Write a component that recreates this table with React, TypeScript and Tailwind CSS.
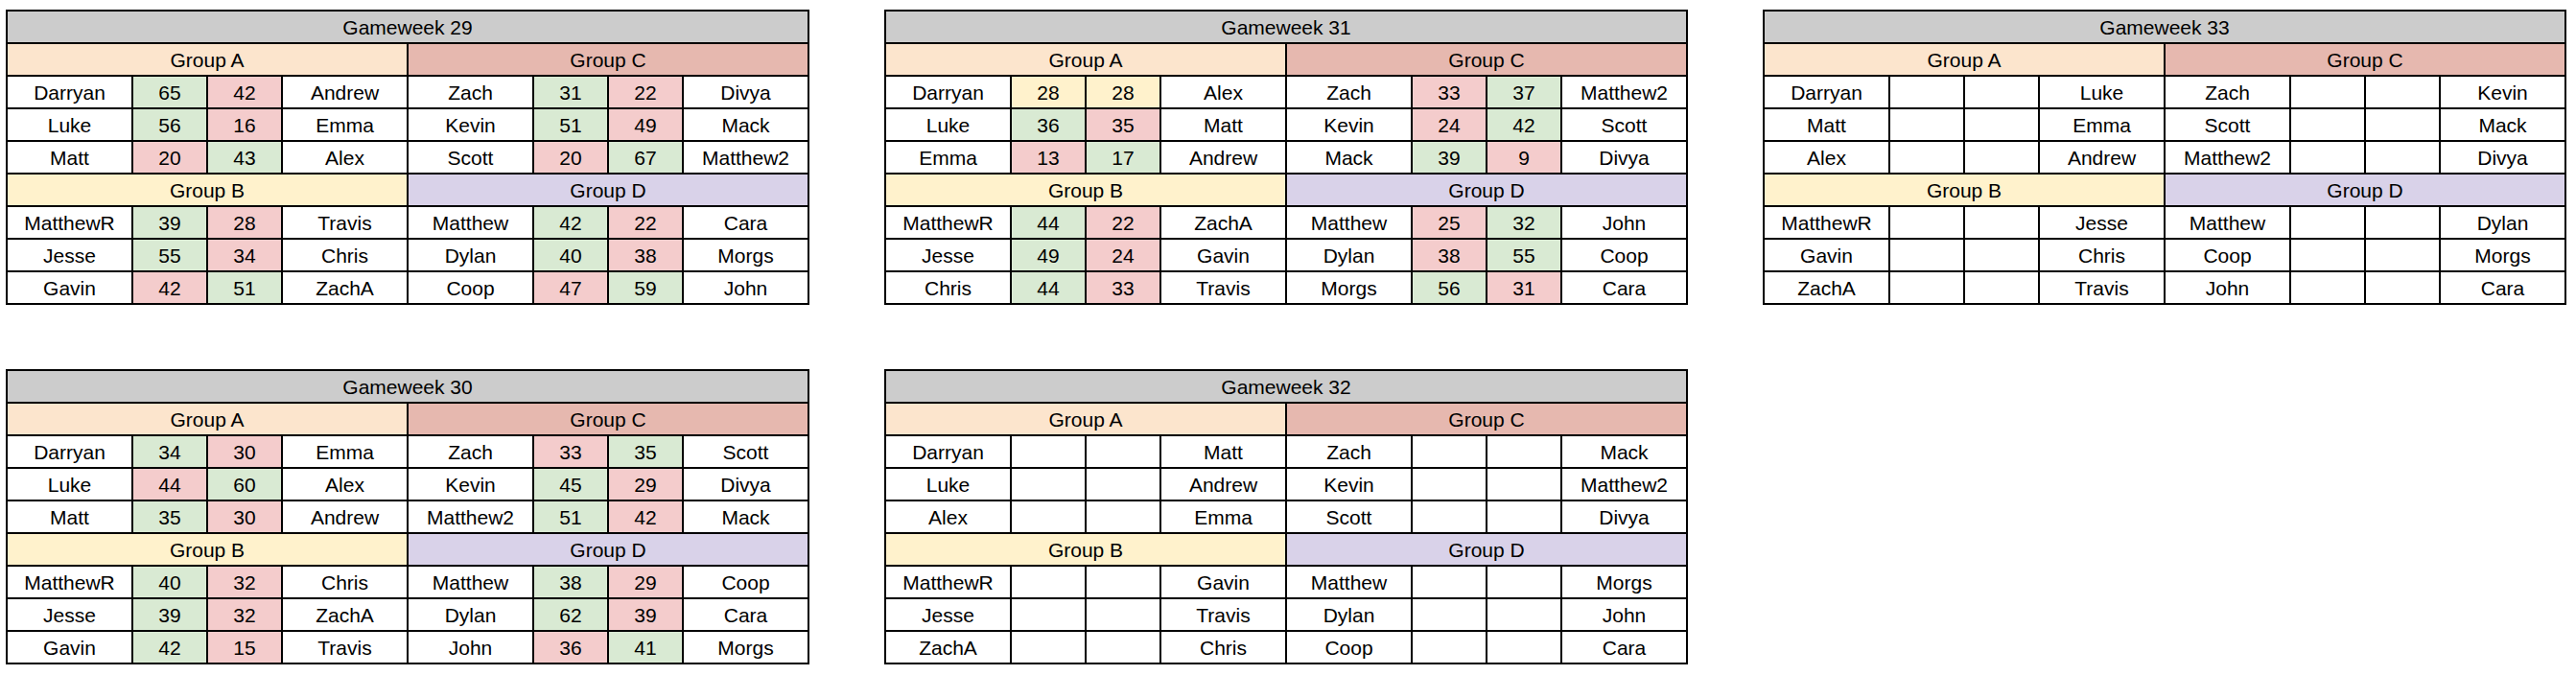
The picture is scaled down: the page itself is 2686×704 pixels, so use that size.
import React from 'react';

type Match = [string, number | null, number | null, string];

interface Week {
  title: string;
  a: Match[];
  b: Match[];
  c: Match[];
  d: Match[];
}

const weeks: Week[] = [
  {
    title: 'Gameweek 29',
    a: [['Darryan', 65, 42, 'Andrew'], ['Luke', 56, 16, 'Emma'], ['Matt', 20, 43, 'Alex']],
    c: [['Zach', 31, 22, 'Divya'], ['Kevin', 51, 49, 'Mack'], ['Scott', 20, 67, 'Matthew2']],
    b: [['MatthewR', 39, 28, 'Travis'], ['Jesse', 55, 34, 'Chris'], ['Gavin', 42, 51, 'ZachA']],
    d: [['Matthew', 42, 22, 'Cara'], ['Dylan', 40, 38, 'Morgs'], ['Coop', 47, 59, 'John']],
  },
  {
    title: 'Gameweek 31',
    a: [['Darryan', 28, 28, 'Alex'], ['Luke', 36, 35, 'Matt'], ['Emma', 13, 17, 'Andrew']],
    c: [['Zach', 33, 37, 'Matthew2'], ['Kevin', 24, 42, 'Scott'], ['Mack', 39, 9, 'Divya']],
    b: [['MatthewR', 44, 22, 'ZachA'], ['Jesse', 49, 24, 'Gavin'], ['Chris', 44, 33, 'Travis']],
    d: [['Matthew', 25, 32, 'John'], ['Dylan', 38, 55, 'Coop'], ['Morgs', 56, 31, 'Cara']],
  },
  {
    title: 'Gameweek 33',
    a: [['Darryan', null, null, 'Luke'], ['Matt', null, null, 'Emma'], ['Alex', null, null, 'Andrew']],
    c: [['Zach', null, null, 'Kevin'], ['Scott', null, null, 'Mack'], ['Matthew2', null, null, 'Divya']],
    b: [['MatthewR', null, null, 'Jesse'], ['Gavin', null, null, 'Chris'], ['ZachA', null, null, 'Travis']],
    d: [['Matthew', null, null, 'Dylan'], ['Coop', null, null, 'Morgs'], ['John', null, null, 'Cara']],
  },
  {
    title: 'Gameweek 30',
    a: [['Darryan', 34, 30, 'Emma'], ['Luke', 44, 60, 'Alex'], ['Matt', 35, 30, 'Andrew']],
    c: [['Zach', 33, 35, 'Scott'], ['Kevin', 45, 29, 'Divya'], ['Matthew2', 51, 42, 'Mack']],
    b: [['MatthewR', 40, 32, 'Chris'], ['Jesse', 39, 32, 'ZachA'], ['Gavin', 42, 15, 'Travis']],
    d: [['Matthew', 38, 29, 'Coop'], ['Dylan', 62, 39, 'Cara'], ['John', 36, 41, 'Morgs']],
  },
  {
    title: 'Gameweek 32',
    a: [['Darryan', null, null, 'Matt'], ['Luke', null, null, 'Andrew'], ['Alex', null, null, 'Emma']],
    c: [['Zach', null, null, 'Mack'], ['Kevin', null, null, 'Matthew2'], ['Scott', null, null, 'Divya']],
    b: [['MatthewR', null, null, 'Gavin'], ['Jesse', null, null, 'Travis'], ['ZachA', null, null, 'Chris']],
    d: [['Matthew', null, null, 'Morgs'], ['Dylan', null, null, 'John'], ['Coop', null, null, 'Cara']],
  },
];

// green = won, red = lost, yellow = draw
const scoreBg = (mine: number | null, theirs: number | null) => {
  if (mine === null || theirs === null) return 'bg-white';
  if (mine > theirs) return 'bg-[#d9ead3]';
  if (mine < theirs) return 'bg-[#f4cccc]';
  return 'bg-[#fff2cc]';
};

const cell = 'border-2 border-black p-0 text-center align-middle';

const MatchCells: React.FC<{ m: Match }> = ({ m }) => (
  <>
    <td className={`${cell} bg-white`}>{m[0]}</td>
    <td className={`${cell} ${scoreBg(m[1], m[2])}`}>{m[1] ?? ''}</td>
    <td className={`${cell} ${scoreBg(m[2], m[1])}`}>{m[2] ?? ''}</td>
    <td className={`${cell} bg-white`}>{m[3]}</td>
  </>
);

const WeekTable: React.FC<{ week: Week }> = ({ week }) => (
  <table className="w-[836px] table-fixed border-collapse border-2 border-black text-[21px] leading-none text-black">
    <colgroup>
      <col className="w-[131px]" />
      <col className="w-[78px]" />
      <col className="w-[78px]" />
      <col className="w-[131px]" />
      <col className="w-[131px]" />
      <col className="w-[78px]" />
      <col className="w-[78px]" />
      <col className="w-[131px]" />
    </colgroup>
    <tbody>
      <tr className="h-[34px]">
        <td colSpan={8} className={`${cell} bg-[#cccccc]`}>{week.title}</td>
      </tr>
      <tr className="h-[34px]">
        <td colSpan={4} className={`${cell} bg-[#fce5cd]`}>Group A</td>
        <td colSpan={4} className={`${cell} bg-[#e6b8af]`}>Group C</td>
      </tr>
      {week.a.map((m, i) => (
        <tr key={'a' + i} className="h-[34px]">
          <MatchCells m={m} />
          <MatchCells m={week.c[i]} />
        </tr>
      ))}
      <tr className="h-[34px]">
        <td colSpan={4} className={`${cell} bg-[#fff2cc]`}>Group B</td>
        <td colSpan={4} className={`${cell} bg-[#d9d2e9]`}>Group D</td>
      </tr>
      {week.b.map((m, i) => (
        <tr key={'b' + i} className="h-[34px]">
          <MatchCells m={m} />
          <MatchCells m={week.d[i]} />
        </tr>
      ))}
    </tbody>
  </table>
);

export default function App() {
  return (
    <div className="min-h-screen bg-white pl-[6px] pt-[10px] font-['Liberation_Sans',Arial,sans-serif]">
      <div className="grid grid-cols-[836px_836px_836px] gap-x-[80px] gap-y-[67px] items-start">
        {weeks.map((w) => (
          <WeekTable key={w.title} week={w} />
        ))}
      </div>
    </div>
  );
}
